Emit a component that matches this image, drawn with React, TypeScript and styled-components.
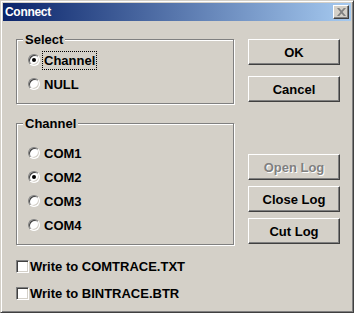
import React from "react";
import styled, { createGlobalStyle, css } from "styled-components";

const Global = createGlobalStyle`
  html, body { margin: 0; padding: 0; background: #D4D0C8; }
  body { font-family: "Liberation Sans", Arial, sans-serif; }
`;

const Window = styled.div`
  box-sizing: border-box;
  width: 354px;
  height: 313px;
  background: #D4D0C8;
  border-style: solid;
  border-width: 1px;
  border-color: #D4D0C8 #404040 #404040 #D4D0C8;
  box-shadow: inset 1px 1px 0 #ffffff, inset -1px -1px 0 #808080;
  padding: 2px;
  display: flex;
  flex-direction: column;
  font-family: "Liberation Sans", Arial, sans-serif;
  font-weight: bold;
  font-size: 13px;
  color: #000;
`;

const TitleBar = styled.div`
  height: 18px;
  flex: none;
  background: linear-gradient(to right, #0A246A, #A6CAF0);
  display: flex;
  align-items: center;
  justify-content: space-between;
  padding: 0 2px 0 2px;
`;

const Title = styled.span`
  color: #fff;
  font-family: "Liberation Sans", Arial, sans-serif;
  font-weight: bold;
  font-size: 12px;
  letter-spacing: -0.3px;
`;

const CloseBtn = styled.div`
  box-sizing: border-box;
  width: 16px;
  height: 14px;
  background: #D4D0C8;
  border-style: solid;
  border-width: 1px;
  border-color: #ffffff #404040 #404040 #ffffff;
  box-shadow: inset -1px -1px 0 #808080;
  display: flex;
  align-items: center;
  justify-content: center;
`;

const Body = styled.div`
  flex: 1;
  display: flex;
  padding: 18px 0 0 13px;
`;

const LeftCol = styled.div`
  width: 218px;
  display: flex;
  flex-direction: column;
`;

const RightCol = styled.div`
  margin-left: 14px;
  display: flex;
  flex-direction: column;
`;

const GroupBox = styled.div<{ $h: number; $pt: number; $mt?: number }>`
  position: relative;
  box-sizing: border-box;
  width: 218px;
  height: ${(p) => p.$h}px;
  margin-top: ${(p) => p.$mt ?? 0}px;
  border: 1px solid #808080;
  box-shadow: inset 1px 1px 0 #ffffff, 1px 1px 0 #ffffff;
  padding: ${(p) => p.$pt}px 0 0 11px;
  display: flex;
  flex-direction: column;
`;

const Legend = styled.span`
  position: absolute;
  top: -8px;
  left: 6px;
  padding: 0 2px 0 2px;
  background: #D4D0C8;
  line-height: 15px;
`;

const RadioRow = styled.label`
  height: 24px;
  display: flex;
  align-items: center;
  gap: 2px;
`;

const RadioCircle = styled.span<{ $on?: boolean }>`
  box-sizing: border-box;
  width: 12px;
  height: 12px;
  border-radius: 50%;
  background: #fff;
  border: 1px solid;
  border-color: #808080 #ffffff #ffffff #808080;
  box-shadow: inset 1px 1px 0 #404040, inset -1px -1px 0 #D4D0C8;
  display: flex;
  align-items: center;
  justify-content: center;
  flex: none;
  &::after {
    content: "";
    display: ${(p) => (p.$on ? "block" : "none")};
    width: 4px;
    height: 4px;
    border-radius: 50%;
    background: #000;
  }
`;

const RadioText = styled.span<{ $focus?: boolean }>`
  padding: 1px 1px;
  line-height: 15px;
  border: 1px dotted transparent;
  ${(p) =>
    p.$focus &&
    css`
      border-color: #000;
    `}
`;

const CheckRow = styled.label<{ $mt: number }>`
  display: flex;
  align-items: center;
  gap: 1px;
  margin-top: ${(p) => p.$mt}px;
  height: 13px;
`;

const CheckBox = styled.span`
  box-sizing: border-box;
  width: 13px;
  height: 13px;
  background: #fff;
  border: 1px solid;
  border-color: #808080 #ffffff #ffffff #808080;
  box-shadow: inset 1px 1px 0 #404040, inset -1px -1px 0 #D4D0C8;
  flex: none;
`;

const Button = styled.div<{ $mt: number; $disabled?: boolean }>`
  box-sizing: border-box;
  width: 92px;
  height: 26px;
  margin-top: ${(p) => p.$mt}px;
  background: #D4D0C8;
  border-style: solid;
  border-width: 1px;
  border-color: #ffffff #404040 #404040 #ffffff;
  box-shadow: inset -1px -1px 0 #808080;
  display: flex;
  align-items: center;
  justify-content: center;
  color: ${(p) => (p.$disabled ? "#808080" : "#000")};
  text-shadow: ${(p) => (p.$disabled ? "1px 1px 0 #ffffff" : "none")};
`;

function Radio({ label, on, focus }: { label: string; on?: boolean; focus?: boolean }) {
  return (
    <RadioRow>
      <RadioCircle $on={on} />
      <RadioText $focus={focus}>{label}</RadioText>
    </RadioRow>
  );
}

export default function App() {
  return (
    <>
      <Global />
      <Window>
        <TitleBar>
          <Title>Connect</Title>
          <CloseBtn>
            <svg width="9" height="8" viewBox="0 0 9 8">
              <path d="M0 0h2.2l2.3 2.6L6.8 0H9L5.6 4 9 8H6.8L4.5 5.4 2.2 8H0l3.4-4z" fill="#808080" />
            </svg>
          </CloseBtn>
        </TitleBar>
        <Body>
          <LeftCol>
            <GroupBox $h={65} $pt={8}>
              <Legend>Select</Legend>
              <Radio label="Channel" on focus />
              <Radio label="NULL" />
            </GroupBox>
            <GroupBox $h={122} $pt={17} $mt={19}>
              <Legend>Channel</Legend>
              <Radio label="COM1" />
              <Radio label="COM2" on />
              <Radio label="COM3" />
              <Radio label="COM4" />
            </GroupBox>
            <CheckRow $mt={15}>
              <CheckBox />
              <span>Write to COMTRACE.TXT</span>
            </CheckRow>
            <CheckRow $mt={14}>
              <CheckBox />
              <span>Write to BINTRACE.BTR</span>
            </CheckRow>
          </LeftCol>
          <RightCol>
            <Button $mt={0}>OK</Button>
            <Button $mt={11}>Cancel</Button>
            <Button $mt={52} $disabled>
              Open Log
            </Button>
            <Button $mt={6}>Close Log</Button>
            <Button $mt={6}>Cut Log</Button>
          </RightCol>
        </Body>
      </Window>
    </>
  );
}
